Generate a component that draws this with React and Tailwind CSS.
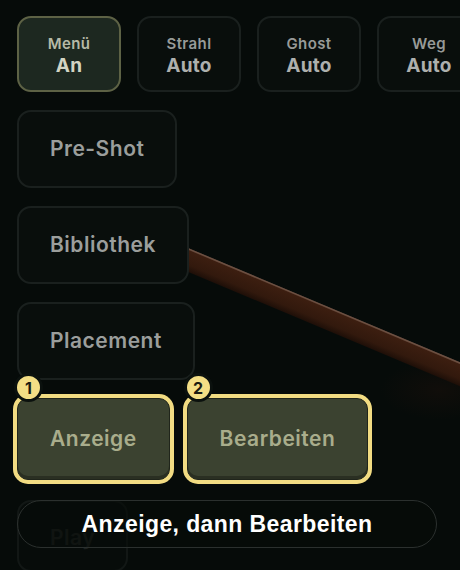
const FONT = { fontFamily: 'Inter, "Liberation Sans", sans-serif' };

function TopToggle({ label, value, active }) {
  return (
    <button
      className={
        'w-[104px] h-[76px] shrink-0 rounded-[14px] border-2 flex flex-col items-center justify-center leading-none pt-[3px] ' +
        (active ? 'bg-[#1d2820] border-[#5d6245]' : 'bg-[#090e0c] border-[#1a201e]')
      }
    >
      <span className={'text-[15px] font-semibold tracking-[0.4px] ' + (active ? 'text-[#b6b9a6]' : 'text-[#979a98]')}>{label}</span>
      <span className={'mt-[5px] text-[19px] font-bold tracking-[0.3px] ' + (active ? 'text-[#d2d4c3]' : 'text-[#aeb0ae]')}>{value}</span>
    </button>
  );
}

function SideButton({ children, faded }) {
  return (
    <button
      className={
        'self-start px-[31px] rounded-[14px] border-2 bg-[#090e0c] border-[#1a201e] text-[21px] font-semibold tracking-[0.5px] ' +
        (faded ? 'h-[72px] text-[#2e3230] opacity-60 pt-[4px]' : 'h-[78px] text-[#9b9e9c]')
      }
    >
      {children}
    </button>
  );
}

function StepButton({ step, children }) {
  return (
    <div className="relative rounded-[15px] bg-[#f2dc82] p-[4px]">
      <button className="h-[82px] px-[32px] rounded-[11px] border border-[#20251b] bg-[#3b4230] shadow-[inset_0_-3px_0_#2a2f22] text-[21px] font-semibold tracking-[0.5px] text-[#a9ad8c]">
        {children}
      </button>
      <span className="absolute left-[1px] top-[-21px] w-[29px] h-[29px] rounded-full bg-[#f3de85] border-[3px] border-[#0b110e] flex items-center justify-center text-[16px] font-bold text-[#1a1a12]">
        {step}
      </span>
    </div>
  );
}

export default function App() {
  return (
    <div className="relative w-[460px] h-[570px] overflow-hidden bg-[#060b09]" style={FONT}>
      {/* cue stick drawn on the table canvas */}
      <svg className="absolute inset-0" width="460" height="570" viewBox="0 0 460 570">
        <defs>
          <linearGradient id="cue" x1="0" y1="0" x2="0" y2="1">
            <stop offset="0" stopColor="#5e4235" />
            <stop offset="0.1" stopColor="#3c1e10" />
            <stop offset="0.7" stopColor="#32190d" />
            <stop offset="1" stopColor="#1e0f08" />
          </linearGradient>
          <radialGradient id="glow" cx="0.5" cy="0.5" r="0.5">
            <stop offset="0" stopColor="#24120c" stopOpacity="0.35" />
            <stop offset="1" stopColor="#24120c" stopOpacity="0" />
          </radialGradient>
        </defs>
        <ellipse cx="440" cy="390" rx="60" ry="30" fill="url(#glow)" />
        <g transform="rotate(22.8 150 245)">
          <rect x="150" y="233" width="360" height="22" fill="url(#cue)" />
          <rect x="150" y="233" width="360" height="1.5" fill="#7d6052" opacity="0.6" />
        </g>
      </svg>

      <div className="relative flex flex-col gap-[18px] px-[17px] pt-[16px]">
        <div className="flex gap-[16px]">
          <TopToggle label="Menü" value="An" active />
          <TopToggle label="Strahl" value="Auto" />
          <TopToggle label="Ghost" value="Auto" />
          <TopToggle label="Weg" value="Auto" />
        </div>
        <SideButton>Pre-Shot</SideButton>
        <SideButton>Bibliothek</SideButton>
        <SideButton>Placement</SideButton>
        <div className="flex gap-[9px] -ml-[4px] -mt-[4px]">
          <StepButton step="1">Anzeige</StepButton>
          <StepButton step="2">Bearbeiten</StepButton>
        </div>
        <div className="-mt-[2px]">
          <SideButton faded>Play</SideButton>
        </div>
      </div>

      {/* hint caption overlay */}
      <div
        className="absolute left-[17px] top-[500px] w-[420px] h-[48px] rounded-[24px] border border-[#2b302e] bg-[#060b09]/60 flex items-center justify-center text-white text-[23px] font-bold tracking-[0.4px]"
        style={{ fontFamily: '"Liberation Sans", Arial, sans-serif' }}
      >
        Anzeige, dann Bearbeiten
      </div>
    </div>
  );
}
